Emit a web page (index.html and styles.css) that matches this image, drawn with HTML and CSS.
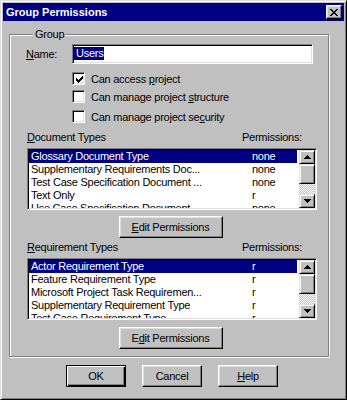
FILE: index.html
```html
<!DOCTYPE html>
<html lang="en">
<head>
  <meta charset="UTF-8">
  <meta name="viewport" content="width=device-width, initial-scale=1.0">
  <title>Group Permissions</title>
  <link rel="stylesheet" href="styles.css">
</head>
<body>
  <div class="window">
    <div class="titlebar">
      <span class="title">Group Permissions</span>
      <span class="close">
        <svg width="8" height="7" viewBox="0 0 8 7" shape-rendering="crispEdges"><path d="M0 0h2v1h-2zM6 0h2v1h-2zM1 1h2v1h-2zM5 1h2v1h-2zM2 2h4v1h-4zM3 3h2v1h-2zM2 4h4v1h-4zM1 5h2v1h-2zM5 5h2v1h-2zM0 6h2v1h-2zM6 6h2v1h-2z" fill="#000"/></svg>
      </span>
    </div>

    <div class="dialog">
      <fieldset class="group">
        <legend>Group</legend>

        <div class="name-row">
          <span class="name-label"><u>N</u>ame:</span>
          <div class="textbox"><span class="sel">Users</span></div>
        </div>

        <div class="check-row row1">
          <span class="checkbox">
            <svg width="7" height="7" viewBox="0 0 7 7" shape-rendering="crispEdges"><path d="M6 0h1v1h-1zM5 1h2v1h-2zM0 2h1v1h-1zM4 2h3v1h-3zM0 3h2v1h-2zM3 3h3v1h-3zM0 4h5v1h-5zM1 5h3v1h-3zM2 6h1v1h-1z" fill="#000"/></svg>
          </span>
          <span>Can access <u>p</u>roject</span>
        </div>
        <div class="check-row row2">
          <span class="checkbox"></span>
          <span>Can manage project <u>s</u>tructure</span>
        </div>
        <div class="check-row row3">
          <span class="checkbox"></span>
          <span>Can manage project se<u>c</u>urity</span>
        </div>

        <div class="list-head head1">
          <span class="head-name"><u>D</u>ocument Types</span>
          <span>Permissions:</span>
        </div>
        <div class="listbox">
          <div class="items">
            <div class="item selected"><span class="item-name">Glossary Document Type</span><span>none</span></div>
            <div class="item"><span class="item-name">Supplementary Requirements Doc...</span><span>none</span></div>
            <div class="item"><span class="item-name">Test Case Specification Document ...</span><span>none</span></div>
            <div class="item"><span class="item-name">Text Only</span><span>r</span></div>
            <div class="item"><span class="item-name">Use Case Specification Document</span><span>none</span></div>
          </div>
          <div class="scrollbar">
            <span class="sb-btn up"><svg width="7" height="4" viewBox="0 0 7 4" shape-rendering="crispEdges"><path d="M3 0h1v1h-1zM2 1h3v1h-3zM1 2h5v1h-5zM0 3h7v1h-7z" fill="#000"/></svg></span>
            <span class="sb-thumb"></span>
            <span class="sb-track"></span>
            <span class="sb-btn down"><svg width="7" height="4" viewBox="0 0 7 4" shape-rendering="crispEdges"><path d="M0 0h7v1h-7zM1 1h5v1h-5zM2 2h3v1h-3zM3 3h1v1h-1z" fill="#000"/></svg></span>
          </div>
        </div>
        <div class="btn-row edit1">
          <button class="btn wide"><u>E</u>dit Permissions</button>
        </div>

        <div class="list-head head2">
          <span class="head-name"><u>R</u>equirement Types</span>
          <span>Permissions:</span>
        </div>
        <div class="listbox">
          <div class="items">
            <div class="item selected"><span class="item-name">Actor Requirement Type</span><span>r</span></div>
            <div class="item"><span class="item-name">Feature Requirement Type</span><span>r</span></div>
            <div class="item"><span class="item-name">Microsoft Project Task Requiremen...</span><span>r</span></div>
            <div class="item"><span class="item-name">Supplementary Requirement Type</span><span>r</span></div>
            <div class="item"><span class="item-name">Test Case Requirement Type</span><span>r</span></div>
          </div>
          <div class="scrollbar">
            <span class="sb-btn up"><svg width="7" height="4" viewBox="0 0 7 4" shape-rendering="crispEdges"><path d="M3 0h1v1h-1zM2 1h3v1h-3zM1 2h5v1h-5zM0 3h7v1h-7z" fill="#000"/></svg></span>
            <span class="sb-thumb"></span>
            <span class="sb-track"></span>
            <span class="sb-btn down"><svg width="7" height="4" viewBox="0 0 7 4" shape-rendering="crispEdges"><path d="M0 0h7v1h-7zM1 1h5v1h-5zM2 2h3v1h-3zM3 3h1v1h-1z" fill="#000"/></svg></span>
          </div>
        </div>
        <div class="btn-row edit2">
          <button class="btn wide">E<u>d</u>it Permissions</button>
        </div>
      </fieldset>

      <div class="buttons">
        <button class="btn default">OK</button>
        <button class="btn">Cancel</button>
        <button class="btn"><u>H</u>elp</button>
      </div>
    </div>
  </div>
</body>
</html>
```

FILE: styles.css
```css
body { margin: 0; background: #c0c0c0; font-family: "Liberation Sans", Arial, sans-serif; font-size: 11px; letter-spacing: -0.25px; color: #000; }
u { text-decoration: underline; text-underline-offset: 1px; }

/* window frame */
.window { width: 347px; height: 400px; box-sizing: border-box; padding: 2px; background: #c0c0c0; border: 1px solid; border-color: #dfdfdf #000 #000 #dfdfdf; box-shadow: inset 1px 1px #fff, inset -1px -1px #808080; }
.titlebar { height: 18px; background: #000080; color: #fff; display: flex; align-items: center; justify-content: space-between; padding: 0 2px 0 3px; }
.title { font-weight: bold; font-size: 11px; line-height: 18px; letter-spacing: 0; }
.close { width: 16px; height: 14px; box-sizing: border-box; display: flex; align-items: center; justify-content: center; padding-right: 1px; background: #c0c0c0; border: 1px solid; border-color: #fff #000 #000 #fff; box-shadow: inset -1px -1px #808080, inset 1px 1px #dfdfdf; }
.close svg { display: block; }

/* group box */
.group { margin: 7px 0 0 6px; width: 320px; box-sizing: border-box; padding: 3px 11px 7px 17px; border: 1px solid #808080; box-shadow: inset 1px 1px #fff, 1px 1px #fff; }
.group legend { margin-left: 6px; padding: 0 2px; line-height: 13px; background: #c0c0c0; }

.name-row { display: flex; align-items: center; height: 20px; margin-right: 4px; }
.name-label { width: 46px; margin-left: -1px; }
.textbox { flex: 1; height: 20px; box-sizing: border-box; padding: 2px 1px 0 0; background: #fff; border: 1px solid; border-color: #808080 #fff #fff #808080; box-shadow: inset 1px 1px #000, inset -1px -1px #dfdfdf; }
.sel { display: inline-block; line-height: 13px; padding: 0 1px 0 2px; background: #000080; color: #fff; margin-left: 1px; }

.check-row { display: flex; align-items: center; gap: 6px; height: 13px; margin-left: 45px; }
.row1 { margin-top: 8px; }
.row2 { margin-top: 5px; }
.row3 { margin-top: 7px; }
.checkbox { width: 13px; height: 13px; box-sizing: border-box; padding: 2px; background: #fff; border: 1px solid; border-color: #808080 #fff #fff #808080; box-shadow: inset 1px 1px #000, inset -1px -1px #dfdfdf; }
.checkbox svg { display: block; margin: 1px 0 0 1px; }

/* lists */
.list-head { display: flex; line-height: 13px; }
.head-name { width: 215px; }
.head1 { margin-top: 8px; }
.head2 { margin-top: 3px; }
.listbox { display: flex; height: 62px; margin-top: 4px; box-sizing: border-box; padding: 1px; background: #fff; border: 1px solid; border-color: #808080 #fff #fff #808080; box-shadow: inset 1px 1px #000, inset -1px -1px #dfdfdf; }
.items { flex: 1; overflow: hidden; }
.item { display: flex; height: 13px; line-height: 13px; padding-left: 2px; white-space: nowrap; }
.item.selected { background: #000080; color: #fff; margin-right: 2px; }
.item-name { flex: 0 0 221px; overflow: hidden; }

.scrollbar { width: 16px; display: flex; flex-direction: column; }
.sb-btn, .sb-thumb { box-sizing: border-box; background: #c0c0c0; border: 1px solid; border-color: #dfdfdf #000 #000 #dfdfdf; box-shadow: inset 1px 1px #fff, inset -1px -1px #808080; }
.sb-btn { height: 14px; display: flex; align-items: center; justify-content: center; }
.sb-btn svg { display: block; }
.sb-thumb { height: 20px; }
.sb-track { flex: 1; background: repeating-conic-gradient(#fff 0 25%, #c0c0c0 0 50%) 0 0 / 2px 2px; }

/* buttons */
.btn-row { display: flex; justify-content: center; }
.edit1 { margin-top: 6px; }
.edit2 { margin-top: 7px; }
.btn { font: inherit; letter-spacing: inherit; color: #000; height: 22px; width: 60px; padding: 0; margin: 0; box-sizing: border-box; background: #c0c0c0; border: 1px solid; border-color: #fff #000 #000 #fff; box-shadow: inset -1px -1px #808080, inset 1px 1px #dfdfdf; }
.btn.wide { width: 104px; margin-left: -3px; }
.btn.default { border-color: #000; box-shadow: inset 1px 1px #fff, inset -1px -1px #000, inset -2px -2px #808080; }

.buttons { display: flex; gap: 16px; margin-top: 8px; padding-left: 63px; }
```
